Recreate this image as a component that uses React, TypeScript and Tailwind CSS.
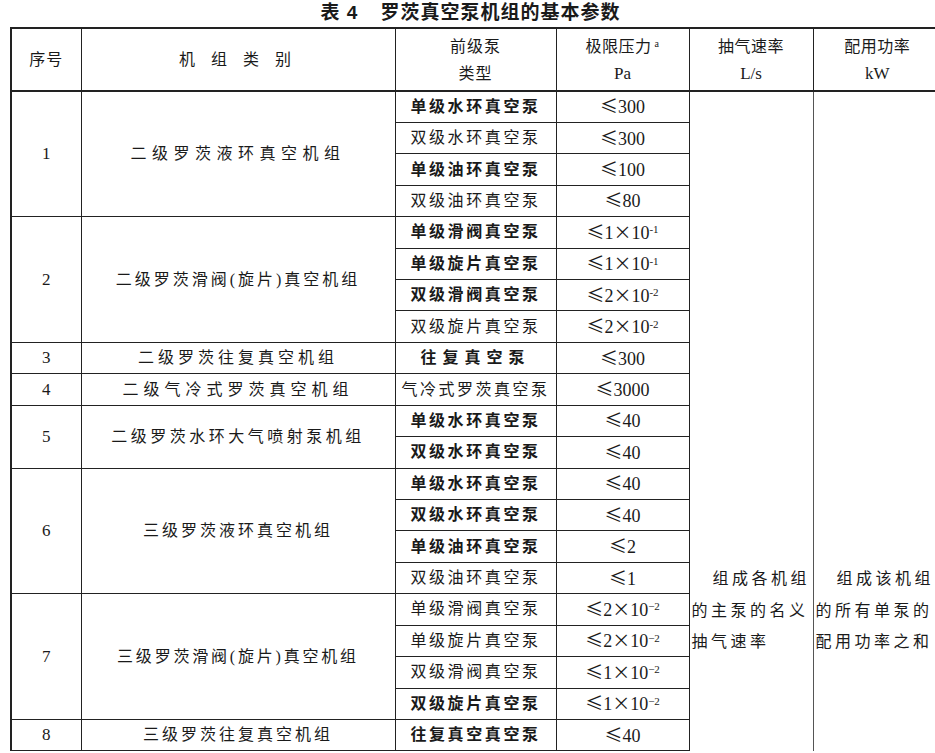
import type { ReactNode } from "react"

const Le = () => <span className="font-['Noto_Sans_CJK_SC']">≤</span>
const X = () => <span className="font-['Noto_Sans_CJK_SC']">×</span>

function exp(base: string, e: string) {
  return (
    <>
      <Le />
      {base}
      <X />
      10<sup className="text-[11px]">{e}</sup>
    </>
  )
}

function plain(v: string) {
  return (
    <>
      <Le />
      {v}
    </>
  )
}

type Pump = { name: string; p: ReactNode; b?: boolean; ls?: string }
type Group = { no: string; name: string; ls: string; pumps: Pump[] }

const groups: Group[] = [
  {
    no: "1",
    name: "二级罗茨液环真空机组",
    ls: "tracking-[5.5px]",
    pumps: [
      { name: "单级水环真空泵", p: plain("300"), b: true },
      { name: "双级水环真空泵", p: plain("300") },
      { name: "单级油环真空泵", p: plain("100"), b: true },
      { name: "双级油环真空泵", p: plain("80") },
    ],
  },
  {
    no: "2",
    name: "二级罗茨滑阀(旋片)真空机组",
    ls: "tracking-[3px]",
    pumps: [
      { name: "单级滑阀真空泵", p: exp("1", "-1"), b: true },
      { name: "单级旋片真空泵", p: exp("1", "-1"), b: true },
      { name: "双级滑阀真空泵", p: exp("2", "-2"), b: true },
      { name: "双级旋片真空泵", p: exp("2", "-2") },
    ],
  },
  {
    no: "3",
    name: "二级罗茨往复真空机组",
    ls: "tracking-[4px]",
    pumps: [{ name: "往复真空泵", p: plain("300"), b: true, ls: "tracking-[6px]" }],
  },
  {
    no: "4",
    name: "二级气冷式罗茨真空机组",
    ls: "tracking-[5px]",
    pumps: [{ name: "气冷式罗茨真空泵", p: plain("3000"), ls: "tracking-[2.5px]" }],
  },
  {
    no: "5",
    name: "二级罗茨水环大气喷射泵机组",
    ls: "tracking-[3.5px]",
    pumps: [
      { name: "单级水环真空泵", p: plain("40"), b: true },
      { name: "双级水环真空泵", p: plain("40"), b: true },
    ],
  },
  {
    no: "6",
    name: "三级罗茨液环真空机组",
    ls: "tracking-[3px]",
    pumps: [
      { name: "单级水环真空泵", p: plain("40"), b: true },
      { name: "双级水环真空泵", p: plain("40"), b: true },
      { name: "单级油环真空泵", p: plain("2"), b: true },
      { name: "双级油环真空泵", p: plain("1") },
    ],
  },
  {
    no: "7",
    name: "三级罗茨滑阀(旋片)真空机组",
    ls: "tracking-[2.8px]",
    pumps: [
      { name: "单级滑阀真空泵", p: exp("2", "−2") },
      { name: "单级旋片真空泵", p: exp("2", "−2") },
      { name: "双级滑阀真空泵", p: exp("1", "−2") },
      { name: "双级旋片真空泵", p: exp("1", "−2"), b: true },
    ],
  },
  {
    no: "8",
    name: "三级罗茨往复真空机组",
    ls: "tracking-[3px]",
    pumps: [{ name: "往复真空真空泵", p: plain("40"), b: true }],
  },
]

const totalRows = groups.reduce((n, g) => n + g.pumps.length, 0)

export default function App() {
  const rows: ReactNode[] = []
  let first = true

  groups.forEach((g) => {
    g.pumps.forEach((pump, i) => {
      const last = g.no === "8"
      const bb = last ? "border-b-[1.5px]" : "border-b"
      rows.push(
        <tr key={g.no + "-" + i} className="h-[31.43px]">
          {i === 0 && (
            <>
              <td
                rowSpan={g.pumps.length}
                className={`border-l-2 border-r ${bb} border-[#222] text-center text-[17px]`}
              >
                {g.no}
              </td>
              <td
                rowSpan={g.pumps.length}
                className={`border-r ${bb} border-[#222] text-center text-[16px] ${g.ls}`}
              >
                {g.name}
              </td>
            </>
          )}
          <td
            className={`border-r ${bb} border-[#222] text-center text-[16px] ${pump.ls ?? "tracking-[2.6px]"} ${
              pump.b ? "font-bold" : ""
            }`}
          >
            {pump.name}
          </td>
          <td className={`border-r ${bb} border-[#222] text-center text-[18px]`}>{pump.p}</td>
          {first && (
            <>
              <td
                rowSpan={totalRows}
                className="border-r border-[#555] align-top pt-[471px] text-[16px] leading-[31.5px] tracking-[3.5px] pl-[2px]"
              >
                <span className="pl-[21px]">组成各机组</span>
                <br />
                的主泵的名义
                <br />
                抽气速率
              </td>
              <td
                rowSpan={totalRows}
                className="align-top pt-[471px] text-[16px] leading-[31.5px] tracking-[3.5px] pl-[2px]"
              >
                <span className="pl-[21px]">组成该机组</span>
                <br />
                的所有单泵的
                <br />
                配用功率之和
              </td>
            </>
          )}
        </tr>
      )
      first = false
    })
  })

  return (
    <div className="w-[935px] h-[753px] overflow-hidden bg-white text-[#1a1a1a] font-['Liberation_Serif','Noto_Sans_CJK_SC',serif]">
      <div className="h-[27px] flex items-center justify-center pl-[6px] text-[19px] font-bold tracking-[1px] font-['Liberation_Sans','Noto_Sans_CJK_SC',sans-serif]">
        <span className="mr-[22px]">表 4</span>
        <span>罗茨真空泵机组的基本参数</span>
      </div>
      <table className="ml-[10px] w-[930px] table-fixed border-collapse">
        <colgroup>
          <col className="w-[70px]" />
          <col className="w-[314px]" />
          <col className="w-[161px]" />
          <col className="w-[133px]" />
          <col className="w-[124px]" />
          <col className="w-[128px]" />
        </colgroup>
        <thead>
          <tr className="h-[63px] text-[16px] leading-[27px]">
            <th className="border-l-2 border-t-2 border-b-2 border-r border-[#222] font-normal tracking-[1px]">
              序号
            </th>
            <th className="border-t-2 border-b-2 border-r border-[#222] font-normal tracking-[6px]">
              机 组 类 别
            </th>
            <th className="border-t-2 border-b-2 border-r border-[#222] font-normal">
              <div className="tracking-[1px]">前级泵</div>
              <div className="tracking-[1px]">类型</div>
            </th>
            <th className="border-t-2 border-b-2 border-r border-[#222] font-normal">
              <div className="tracking-[0.5px]">
                极限压力<sup className="text-[10px] ml-[3px]">a</sup>
              </div>
              <div className="text-[17px]">Pa</div>
            </th>
            <th className="border-t-2 border-b-2 border-r border-[#222] font-normal">
              <div className="tracking-[0.5px]">抽气速率</div>
              <div className="text-[17px]">L/s</div>
            </th>
            <th className="border-t-2 border-b-2 border-[#222] font-normal">
              <div className="tracking-[0.5px]">配用功率</div>
              <div className="text-[17px]">kW</div>
            </th>
          </tr>
        </thead>
        <tbody>{rows}</tbody>
      </table>
    </div>
  )
}
